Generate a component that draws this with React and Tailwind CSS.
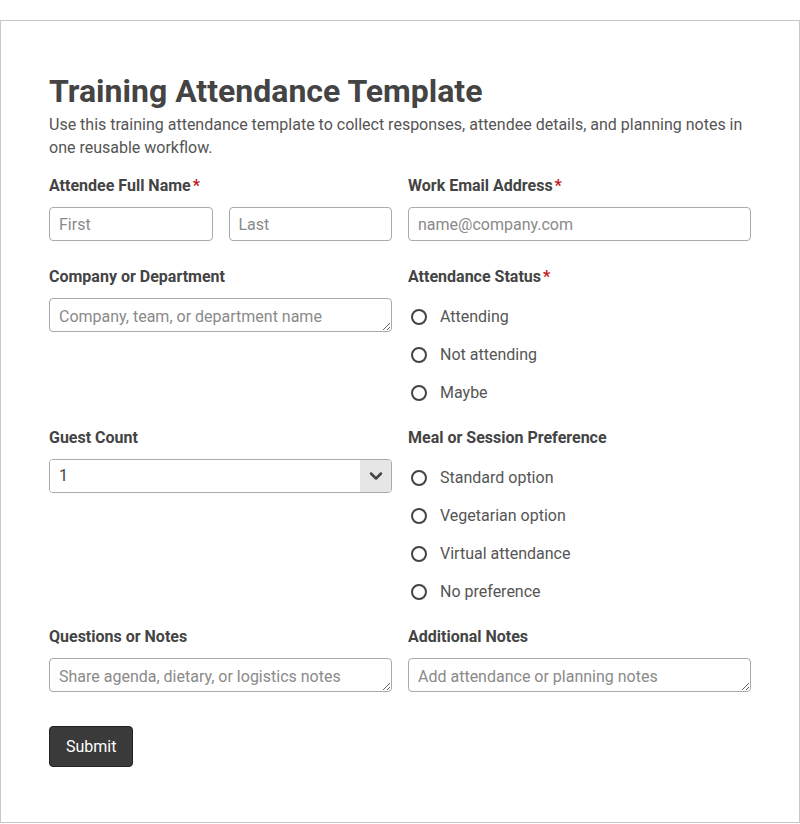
import { ChevronDown } from "lucide-react";

const inputCls =
  "h-[34px] w-full rounded border border-[#a9a9a9] bg-white px-[9px] text-base text-[#444] placeholder:text-[#8a8a8a] outline-none";

function Label({ children, required }) {
  return (
    <div className="mb-2 text-base font-bold leading-[26px] text-[#444]">
      {children}
      {required ? <span className="ml-0.5 text-[#c0161d]">*</span> : null}
    </div>
  );
}

function Radio({ name, label }) {
  return (
    <label className="flex h-6 items-center text-base text-[#555]">
      <span className="ml-[3px] mr-[13px] h-4 w-4 rounded-full border-2 border-[#444]" />
      {label}
      <input type="radio" name={name} className="hidden" />
    </label>
  );
}

function RadioGroup({ name, options }) {
  return (
    <div className="flex flex-col gap-[14px] pt-[7px]">
      {options.map((o) => (
        <Radio key={o} name={name} label={o} />
      ))}
    </div>
  );
}

function Area({ placeholder }) {
  return (
    <textarea
      rows={1}
      placeholder={placeholder}
      className={`${inputCls} block resize-y pb-[3px] pt-[7px] leading-[22px]`}
    />
  );
}

export default function App() {
  return (
    <div className="min-h-screen bg-white pt-5" style={{ fontFamily: "Roboto, 'Liberation Sans', sans-serif" }}>
      <div className="border border-[#c8c8c8] px-12 pb-[55px] pt-[52px]">
        <h1 className="text-[32px] font-bold leading-9 text-[#444]">Training Attendance Template</h1>
        <p className="mt-1 text-base leading-[23px] text-[#555]">
          Use this training attendance template to collect responses, attendee details, and planning notes in one
          reusable workflow.
        </p>

        <form onSubmit={(e) => e.preventDefault()}>
          <div className="mt-[14px] grid grid-cols-2 gap-x-4">
            <div>
              <Label required>Attendee Full Name</Label>
              <div className="grid grid-cols-2 gap-4">
                <input className={inputCls} placeholder="First" />
                <input className={inputCls} placeholder="Last" />
              </div>
            </div>
            <div>
              <Label required>Work Email Address</Label>
              <input className={inputCls} placeholder="name@company.com" />
            </div>
          </div>

          <div className="mt-[23px] grid grid-cols-2 gap-x-4">
            <div>
              <Label>Company or Department</Label>
              <Area placeholder="Company, team, or department name" />
            </div>
            <div>
              <Label required>Attendance Status</Label>
              <RadioGroup name="status" options={["Attending", "Not attending", "Maybe"]} />
            </div>
          </div>

          <div className="mt-[20px] grid grid-cols-2 gap-x-4">
            <div>
              <Label>Guest Count</Label>
              <div className="flex h-[34px] overflow-hidden rounded border border-[#a9a9a9] bg-white">
                <select className="flex-1 appearance-none bg-white px-[9px] text-base text-[#444] outline-none">
                  <option>1</option>
                  <option>2</option>
                  <option>3</option>
                </select>
                <div className="flex w-[31px] items-center justify-center bg-[#e6e6e6] text-[#444]">
                  <ChevronDown size={20} strokeWidth={3} />
                </div>
              </div>
            </div>
            <div>
              <Label>Meal or Session Preference</Label>
              <RadioGroup
                name="meal"
                options={["Standard option", "Vegetarian option", "Virtual attendance", "No preference"]}
              />
            </div>
          </div>

          <div className="mt-[20px] grid grid-cols-2 gap-x-4">
            <div>
              <Label>Questions or Notes</Label>
              <Area placeholder="Share agenda, dietary, or logistics notes" />
            </div>
            <div>
              <Label>Additional Notes</Label>
              <Area placeholder="Add attendance or planning notes" />
            </div>
          </div>

          <button
            type="submit"
            className="mt-[34px] h-[41px] rounded border border-[#222] bg-[#3a3a3a] px-4 text-base text-white"
          >
            Submit
          </button>
        </form>
      </div>
    </div>
  );
}
